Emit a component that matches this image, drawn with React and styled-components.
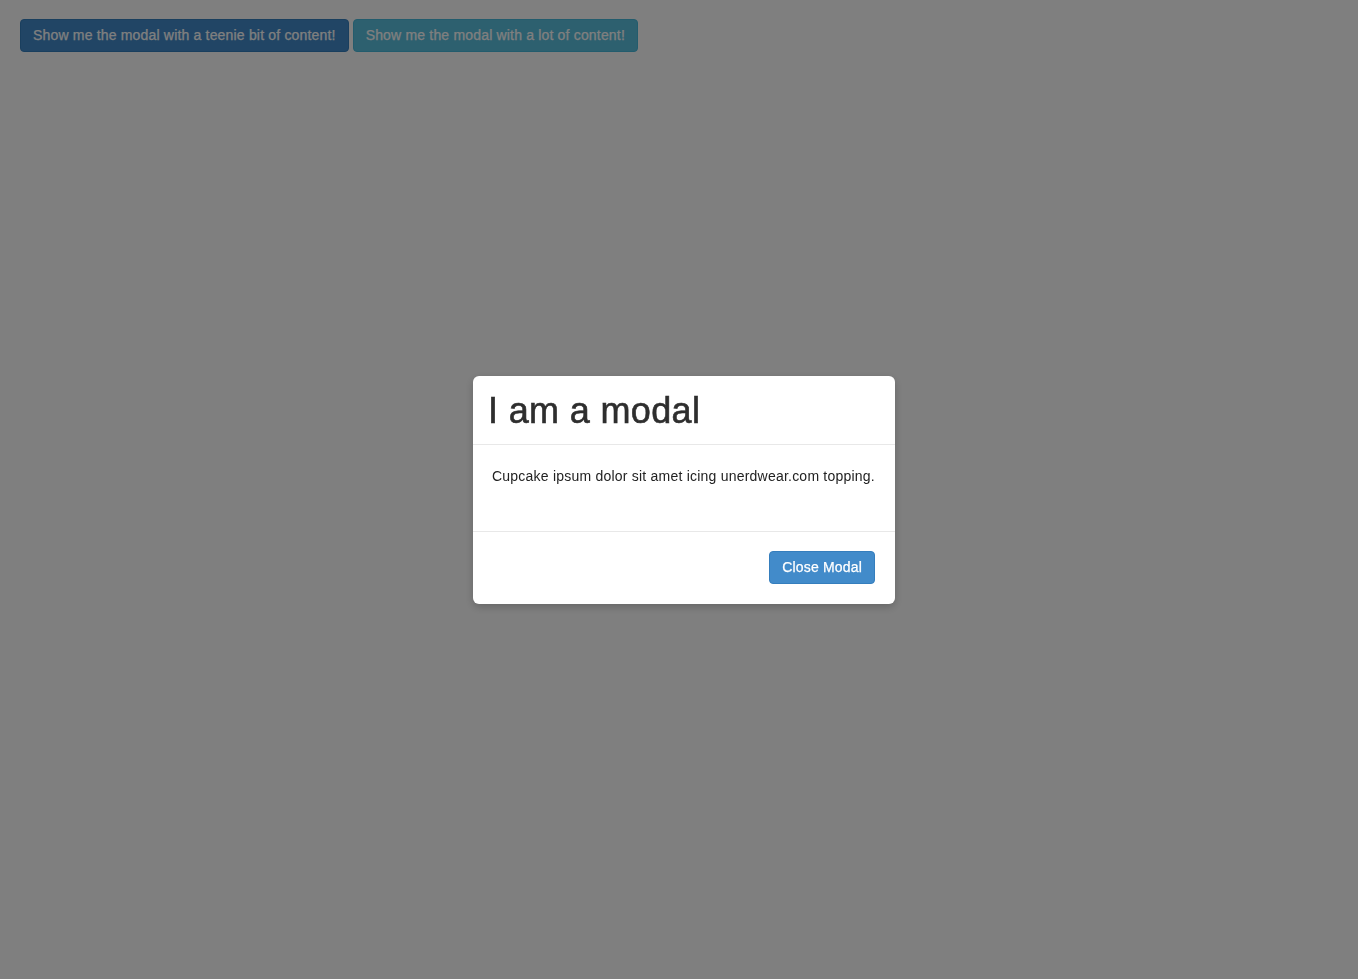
import React from 'react';
import styled, { createGlobalStyle } from 'styled-components';

const GlobalStyle = createGlobalStyle`
	html, body {
		margin: 0;
		height: 100%;
		background: #fff;
		font-family: "Liberation Sans", Arial, sans-serif;
		font-size: 14px;
		color: #333;
	}
	#root {
		height: 100%;
	}
`;

const Page = styled.div`
	display: flex;
	gap: 4px;
	align-items: flex-start;

	padding: 19px 20px;
`;

const Button = styled.button`
	height: 33px;
	padding: 0 12px;

	background: ${props => props.background};
	border: 1px solid ${props => props.border};
	border-radius: 4px;

	font-family: "Liberation Sans", Arial, sans-serif;
	font-size: 14px;
	line-height: 31px;
	color: #fff;
	letter-spacing: 0.18px;
	-webkit-text-stroke: 0.25px currentColor;

	cursor: pointer;
`;

const Overlay = styled.div`
	position: fixed;
	inset: 0;

	display: flex;
	align-items: center;
	justify-content: center;

	background: rgba(0, 0, 0, 0.5);
`;

const Modal = styled.div`
	display: flex;
	flex-direction: column;

	width: 422px;
	margin: 1px 0 0 10px;

	background: #fff;
	border-radius: 6px;
	box-shadow: 0 3px 9px rgba(0, 0, 0, 0.2);
`;

const Header = styled.div`
	padding: 15px 15px 13px;

	border-bottom: 1px solid #e8e8e8;
`;

const Title = styled.h1`
	margin: 0;

	font-size: 36px;
	font-weight: 500;
	line-height: 40px;
	color: #2e2e2e;
	letter-spacing: 0.35px;
	-webkit-text-stroke: 0.6px currentColor;
`;

const Body = styled.div`
	padding: 21px 19px 45px;

	font-size: 14px;
	line-height: 20px;
	color: #222;
	letter-spacing: 0.22px;
`;

const Footer = styled.div`
	display: flex;
	justify-content: flex-end;

	padding: 19px 20px 20px;

	border-top: 1px solid #e8e8e8;
`;

const App = () => (
	<>
		<GlobalStyle />
		<Page>
			<Button background="#428bca" border="#357ebd">
				Show me the modal with a teenie bit of content!
			</Button>
			<Button background="#5bc0de" border="#46b8da">
				Show me the modal with a lot of content!
			</Button>
		</Page>
		<Overlay>
			<Modal>
				<Header>
					<Title>I am a modal</Title>
				</Header>
				<Body>
					Cupcake ipsum dolor sit amet icing unerdwear.com topping.
				</Body>
				<Footer>
					<Button background="#428bca" border="#357ebd">
						Close Modal
					</Button>
				</Footer>
			</Modal>
		</Overlay>
	</>
);

export default App;
